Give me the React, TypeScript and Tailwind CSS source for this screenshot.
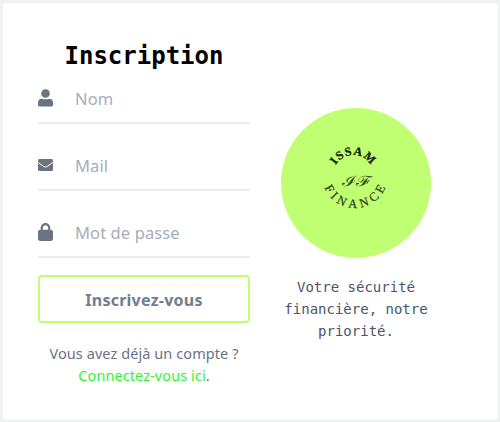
import type { ReactNode } from "react";
import { FaLock } from "react-icons/fa6";

const sans = "font-['Noto_Sans','Open_Sans',sans-serif]";
const mono = "font-['DejaVu_Sans_Mono','Liberation_Mono',monospace]";

function Field({ icon, label }: { icon: ReactNode; label: string }) {
  return (
    <label className="flex h-[67px] w-full flex-col justify-end">
      <span className="flex h-12 items-center border-b-2 border-[#ececee]">
        <span className="flex w-[15px] justify-center text-[#6b7280]">{icon}</span>
        <input
          placeholder={label}
          className="ml-[22px] h-8 w-[160px] bg-transparent pb-px text-[16.5px] tracking-[0.1px] outline-none placeholder:text-[#a9adb8]"
        />
      </span>
    </label>
  );
}

function User() {
  return (
    <svg viewBox="0 0 15 18" className="mb-[3px] h-[18px] w-[15px]" fill="currentColor">
      <circle cx="7.5" cy="4.5" r="4.3" />
      <path d="M4 9.8 Q7.5 10.8 11 9.8 Q15 9.9 15 14 V16 Q15 17.4 13.6 17.4 H1.4 Q0 17.4 0 16 V14 Q0 9.9 4 9.8 Z" />
    </svg>
  );
}

function Envelope() {
  return (
    <svg viewBox="0 0 15 12" className="mb-[2px] h-3 w-[15px]">
      <rect width="15" height="12" rx="1.5" fill="currentColor" />
      <path d="M0 3.4 L5.8 7.5 Q7.5 8.7 9.2 7.5 L15 3.4" fill="none" stroke="#fff" strokeWidth="1" />
    </svg>
  );
}

function Logo() {
  return (
    <svg viewBox="0 0 150 150" className="block size-[150px]">
      <circle cx="75" cy="75" r="75" fill="#c1ff72" />
      <defs>
        <path id="top" d="M52 73 L52 67 A20 20 0 0 1 92 67 L92 73" />
        <path id="bottom" d="M41 61 L41 67 A33 33 0 0 0 107 67 L107 61" />
      </defs>
      <g fontFamily="'Liberation Serif', serif" fill="#17230c">
        <text fontSize="12" fontWeight="700" textAnchor="middle" stroke="#17230c" strokeWidth="0.3">
          <textPath href="#top" startOffset="50%" textLength="42">ISSAM</textPath>
        </text>
        <text fontSize="12.5" textAnchor="middle" fill="#2c3b19" stroke="#2c3b19" strokeWidth="0.2">
          <textPath href="#bottom" startOffset="50%" textLength="78">FINANCE</textPath>
        </text>
        <text x="60.5" y="77.5" fontSize="14" fill="#34451f" textLength="31" lengthAdjust="spacingAndGlyphs">ℐℱ</text>
      </g>
    </svg>
  );
}

export default function App() {
  return (
    <main className={`h-[422px] w-[500px] bg-[#f0f1f3] pt-[3px] pl-[3px] ${sans}`}>
      <div className="flex h-[417px] w-[495px] rounded-[4px] bg-white pl-[35px]">
        <form className="flex w-[212px] flex-col">
          <h1 className={`mt-[37px] h-[17px] text-center text-2xl leading-8 font-bold whitespace-nowrap text-black ${mono}`}>
            Inscription
          </h1>
          <Field icon={<User />} label="Nom" />
          <Field icon={<Envelope />} label="Mail" />
          <Field icon={<FaLock className="mb-[3px] h-[18px] w-[15px]" preserveAspectRatio="none" />} label="Mot de passe" />
          <button
            type="button"
            className="mt-[17px] h-12 w-full rounded-[4px] border-2 border-[#c1ff72] pt-[2px] text-base font-bold tracking-[0.25px] text-[#6f7e90]"
          >
            Inscrivez-vous
          </button>
          <p className="mt-[19px] text-center text-[14.5px] leading-[22px] tracking-[0.08px] whitespace-nowrap text-[#6b7280]">
            Vous avez déjà un compte ?
            <br />
            <a className="text-[#35f435]">Connectez-vous ici</a>.
          </p>
        </form>
        <aside className="ml-7 flex w-[156px] flex-col items-center pt-[105px]">
          <Logo />
          <p className={`mt-[18px] text-center text-sm leading-[22px] text-[#4b5568] ${mono}`}>
            Votre sécurité
            <br />
            financière, notre
            <br />
            priorité.
          </p>
        </aside>
      </div>
    </main>
  );
}
